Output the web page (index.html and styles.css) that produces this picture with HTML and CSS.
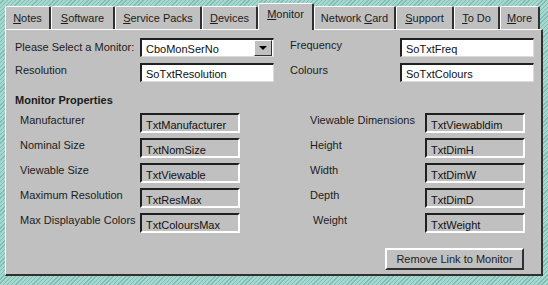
FILE: index.html
```html
<!DOCTYPE html>
<html lang="en">
<head>
    <meta charset="UTF-8">
    <meta name="viewport" content="width=device-width, initial-scale=1.0">
    <title>Monitor</title>
    <link rel="stylesheet" href="styles.css">
</head>
<body>
    <div class="window">
        <div class="tabstrip">
            <div class="tab tab-notes"><u>N</u>otes</div>
            <div class="tab tab-software"><u>S</u>oftware</div>
            <div class="tab tab-packs"><u>S</u>ervice Packs</div>
            <div class="tab tab-devices"><u>D</u>evices</div>
            <div class="tab tab-monitor active"><u>M</u>onitor</div>
            <div class="tab tab-network">Network <u>C</u>ard</div>
            <div class="tab tab-support"><u>S</u>upport</div>
            <div class="tab tab-todo"><u>T</u>o Do</div>
            <div class="tab tab-more"><u>M</u>ore</div>
        </div>

        <div class="panel">
            <div class="top">
                <label class="lbl">Please Select a Monitor:</label>
                <div class="combo">
                    <span class="combo-text">CboMonSerNo</span>
                    <span class="combo-btn"><span class="arrow"></span></span>
                </div>
                <label class="lbl lbl-up">Frequency</label>
                <div class="textbox">SoTxtFreq</div>

                <label class="lbl lbl-up">Resolution</label>
                <div class="textbox">SoTxtResolution</div>
                <label class="lbl lbl-up">Colours</label>
                <div class="textbox">SoTxtColours</div>
            </div>

            <h2>Monitor Properties</h2>

            <div class="props">
                <div class="prop-col">
                    <div class="prop"><span class="prop-lbl">Manufacturer</span><span class="readonly">TxtManufacturer</span></div>
                    <div class="prop"><span class="prop-lbl">Nominal Size</span><span class="readonly">TxtNomSize</span></div>
                    <div class="prop"><span class="prop-lbl">Viewable Size</span><span class="readonly">TxtViewable</span></div>
                    <div class="prop"><span class="prop-lbl">Maximum Resolution</span><span class="readonly">TxtResMax</span></div>
                    <div class="prop"><span class="prop-lbl">Max Displayable Colors</span><span class="readonly">TxtColoursMax</span></div>
                </div>
                <div class="prop-col right">
                    <div class="prop"><span class="prop-lbl">Viewable Dimensions</span><span class="readonly">TxtViewabldim</span></div>
                    <div class="prop"><span class="prop-lbl">Height</span><span class="readonly">TxtDimH</span></div>
                    <div class="prop"><span class="prop-lbl">Width</span><span class="readonly">TxtDimW</span></div>
                    <div class="prop"><span class="prop-lbl">Depth</span><span class="readonly">TxtDimD</span></div>
                    <div class="prop"><span class="prop-lbl shifted">Weight</span><span class="readonly">TxtWeight</span></div>
                </div>
            </div>

            <div class="actions">
                <button class="btn">Remove Link to Monitor</button>
            </div>
        </div>
    </div>
</body>
</html>
```

FILE: styles.css
```css
* {
    margin: 0;
    padding: 0;
    box-sizing: border-box;
}
body {
    width: 548px;
    height: 285px;
    overflow: hidden;
    font-family: 'Liberation Sans', Arial, sans-serif;
    font-size: 11px;
    color: #1c1c1c;
    background-color: #a6d8d0;
    background-image: repeating-linear-gradient(135deg, #a6d8d0 0px, #a6d8d0 2px, #7fbdb4 2px, #7fbdb4 3px);
}
.window {
    padding: 3px 5px 0 5px;
}

/* tab strip */
.tabstrip {
    display: flex;
    align-items: flex-end;
    height: 26px;
    width: 536px;
}
.tab {
    flex: none;
    height: 23px;
    padding-top: 5px;
    text-align: center;
    background-color: #c0c0c0;
    border-top: 1px solid #ffffff;
    border-left: 1px solid #ffffff;
    border-right: 2px solid #303030;
    border-top-left-radius: 2px;
    border-top-right-radius: 2px;
    white-space: nowrap;
    position: relative;
}
.tab-notes { width: 46px; }
.tab-software { width: 64px; }
.tab-packs { width: 87px; }
.tab-devices { width: 56px; }
.tab-monitor { width: 56px; }
.tab-network { width: 82px; }
.tab-support { width: 58px; }
.tab-todo { width: 46px; }
.tab-more { width: 40px; }
.tab.active {
    height: 27px;
    margin-bottom: -1px;
    padding-top: 4px;
    z-index: 1;
}

/* tab page */
.panel {
    width: 538px;
    height: 247px;
    background-color: #c0c0c0;
    border-top: 1px solid #ffffff;
    border-left: 1px solid #ffffff;
    border-right: 2px solid #303030;
    border-bottom: 2px solid #303030;
    padding: 8px 17px 0 9px;
}

.top {
    display: grid;
    grid-template-columns: 125px 150px 110px 134px;
    row-gap: 6px;
}
.lbl {
    padding-top: 3px;
    height: 19px;
}
.lbl-up {
    padding-top: 1px;
}
.textbox, .combo {
    width: 134px;
    height: 19px;
    background-color: #ffffff;
    border-top: 2px solid #202020;
    border-left: 2px solid #202020;
    border-right: 1px solid #dcdcdc;
    border-bottom: 1px solid #dcdcdc;
    padding: 2px 0 0 4px;
    color: #111;
    line-height: 14px;
}
.combo {
    display: flex;
    justify-content: space-between;
    padding-right: 1px;
    padding-top: 0;
}
.combo-text {
    padding-top: 2px;
}
.combo-btn {
    width: 18px;
    height: 16px;
    background-color: #c0c0c0;
    border-top: 1px solid #ffffff;
    border-left: 1px solid #ffffff;
    border-right: 1px solid #303030;
    border-bottom: 1px solid #303030;
    display: flex;
    align-items: center;
    justify-content: center;
}
.arrow {
    width: 0;
    height: 0;
    border-left: 4px solid transparent;
    border-right: 4px solid transparent;
    border-top: 4px solid #000;
}

h2 {
    font-size: 11px;
    font-weight: bold;
    margin-top: 12px;
    height: 19px;
    color: #1a1a1a;
}

/* properties */
.props {
    display: flex;
    gap: 65px;
}
.prop-col {
    display: flex;
    flex-direction: column;
    gap: 5px;
}
.prop {
    display: flex;
    height: 20px;
}
.prop-lbl {
    width: 125px;
    padding-left: 5px;
    padding-top: 1px;
}
.right .prop-lbl {
    width: 120px;
}
.prop-lbl.shifted {
    padding-left: 8px;
}
.readonly {
    width: 100px;
    height: 20px;
    border-top: 2px solid #202020;
    border-left: 2px solid #202020;
    border-right: 2px solid #ffffff;
    border-bottom: 2px solid #ffffff;
    padding: 3px 0 0 4px;
    line-height: 14px;
    color: #111;
    white-space: nowrap;
    overflow: hidden;
}

.actions {
    display: flex;
    justify-content: flex-end;
    margin-top: 15px;
}
.btn {
    width: 139px;
    height: 22px;
    font-family: 'Liberation Sans', Arial, sans-serif;
    font-size: 11px;
    color: #1c1c1c;
    background-color: #c0c0c0;
    border-top: 2px solid #ffffff;
    border-left: 2px solid #ffffff;
    border-right: 2px solid #303030;
    border-bottom: 2px solid #303030;
}
```
